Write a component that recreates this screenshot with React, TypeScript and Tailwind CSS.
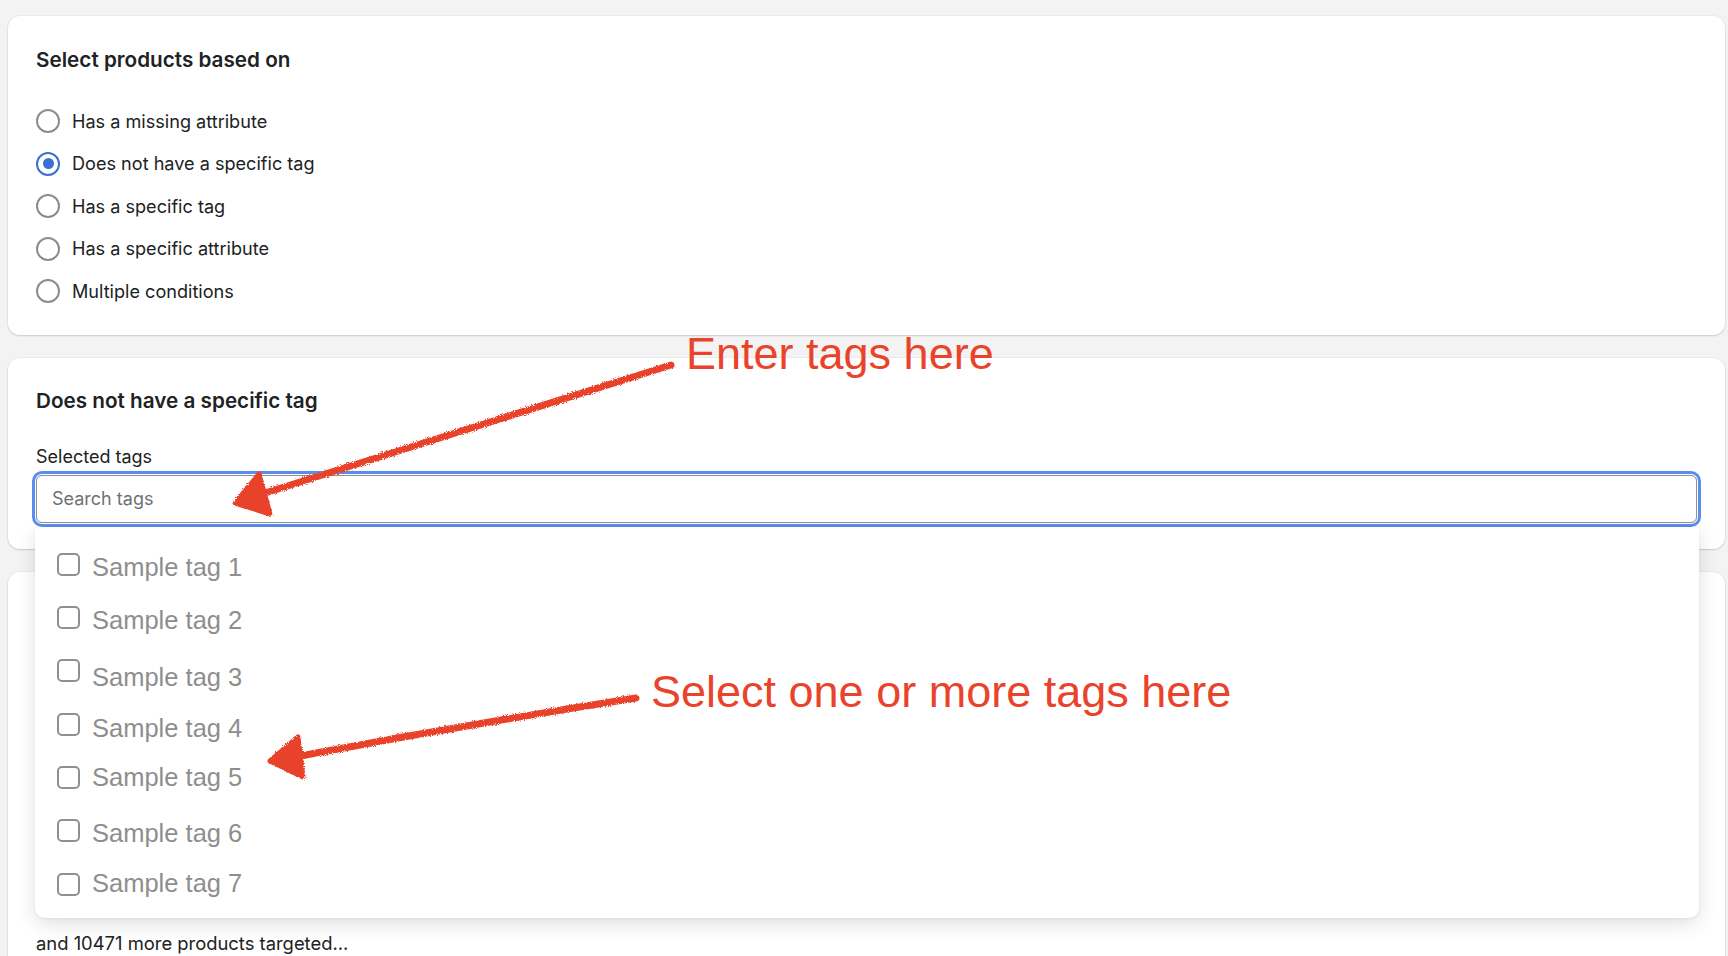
import React, { useState } from 'react';

const options = [
  'Has a missing attribute',
  'Does not have a specific tag',
  'Has a specific tag',
  'Has a specific attribute',
  'Multiple conditions',
];

// small vertical nudges so the labels sit like in the original capture
const tags = [
  { label: 'Sample tag 1', shift: 'translate-y-[3px]' },
  { label: 'Sample tag 2', shift: 'translate-y-[3px]' },
  { label: 'Sample tag 3', shift: 'translate-y-[6px]' },
  { label: 'Sample tag 4', shift: 'translate-y-[4px]' },
  { label: 'Sample tag 5', shift: 'translate-y-[0px]' },
  { label: 'Sample tag 6', shift: 'translate-y-[2px]' },
  { label: 'Sample tag 7', shift: 'translate-y-[-1px]' },
];

const Radio: React.FC<{ checked: boolean }> = ({ checked }) => (
  <span
    className={`flex items-center justify-center w-6 h-6 rounded-full border-2 bg-white shrink-0 ${
      checked ? 'border-[#3b6fd4]' : 'border-[#8c8c8c]'
    }`}
  >
    {checked && <span className="w-[11px] h-[11px] rounded-full bg-[#3b6fd4]" />}
  </span>
);

const Card: React.FC<{ className?: string; children: React.ReactNode }> = ({ className, children }) => (
  <div
    className={`relative bg-white rounded-[12px] shadow-[0_1px_2px_rgba(0,0,0,0.14),0_0_0_1px_rgba(0,0,0,0.03)] px-[28px] ${className || ''}`}
  >
    {children}
  </div>
);

// hand drawn annotation arrows, crayon look
const Annotations: React.FC = () => (
  <div className="pointer-events-none absolute inset-0 z-20">
    <svg width="1728" height="956" className="absolute left-0 top-0">
      <defs>
        <filter id="crayon" x="-10%" y="-10%" width="120%" height="120%">
          <feTurbulence type="fractalNoise" baseFrequency="1.1" numOctaves="2" result="noise" />
          <feDisplacementMap in="SourceGraphic" in2="noise" scale="3.5" />
        </filter>
      </defs>
      <g filter="url(#crayon)" fill="#e9432b" stroke="#e9432b" strokeLinecap="round" strokeLinejoin="round">
        <path d="M671 365 Q 470 428 262 494" fill="none" strokeWidth="7" />
        <path d="M235 503 L259 474 L270 514 Z" strokeWidth="5" />
        <path d="M636 698 Q 470 724 300 756" fill="none" strokeWidth="7" />
        <path d="M270 761 L298 737 L303 777 Z" strokeWidth="5" />
      </g>
    </svg>
    <div className="absolute left-[686px] top-[331px] text-[45px] leading-none text-[#e9432b] font-['Liberation_Sans',Arial,sans-serif] whitespace-nowrap">
      Enter tags here
    </div>
    <div className="absolute left-[651px] top-[669px] text-[45px] leading-none text-[#e9432b] font-['Liberation_Sans',Arial,sans-serif] whitespace-nowrap">
      Select one or more tags here
    </div>
  </div>
);

export default function App() {
  const [selected, setSelected] = useState(1);

  return (
    <div className="relative h-[956px] overflow-hidden bg-[#f3f3f3] font-['Inter','Noto_Sans',sans-serif] text-[#202223]">
      <div className="flex flex-col gap-[23px] pt-[16px] pl-[8px] pr-[3px]">
        <Card className="pt-[30px] pb-[22px]">
          <h2 className="text-[20.7px] leading-[28px] font-semibold">Select products based on</h2>
          <ul className="mt-[26px]">
            {options.map((o, i) => (
              <li key={o} className="flex items-center gap-3 h-[42.5px] cursor-pointer" onClick={() => setSelected(i)}>
                <Radio checked={selected === i} />
                <span className="text-[18.1px]">{o}</span>
              </li>
            ))}
          </ul>
        </Card>

        <Card className="pt-[29px] pb-[26px] z-10">
          <h2 className="text-[20.7px] leading-[28px] font-semibold">Does not have a specific tag</h2>
          <div className="mt-[30px] text-[18px] leading-[24px]">Selected tags</div>
          <div className="mt-[6px] h-[48px] rounded-[6px] border border-[#8c9196] ring-3 ring-[#5b8def] ring-offset-1 flex items-center px-[15px]">
            <input
              className="w-full bg-transparent outline-none text-[18px] placeholder:text-[#6d7175]"
              placeholder="Search tags"
            />
          </div>

          <div className="absolute left-[27px] right-[26px] top-[169px] h-[391px] bg-white rounded-b-[10px] shadow-[0_6px_20px_rgba(0,0,0,0.12),0_1px_3px_rgba(0,0,0,0.06)] pt-[11px] pl-[22px]">
            {tags.map((t) => (
              <label key={t.label} className="flex items-center gap-3 h-[53.33px]">
                <span className="w-[23px] h-[23px] rounded-[5px] border-2 border-[#8c9196] bg-white shrink-0" />
                <span className={`text-[25.5px] text-[#8e8e8e] font-['Liberation_Sans',Arial,sans-serif] ${t.shift}`}>
                  {t.label}
                </span>
              </label>
            ))}
          </div>
        </Card>

        <Card className="pt-[28px] pb-[40px]">
          <div className="h-[331px]" />
          <p className="text-[18.4px] leading-[24px]">and 10471 more products targeted...</p>
        </Card>
      </div>

      <Annotations />
    </div>
  );
}
